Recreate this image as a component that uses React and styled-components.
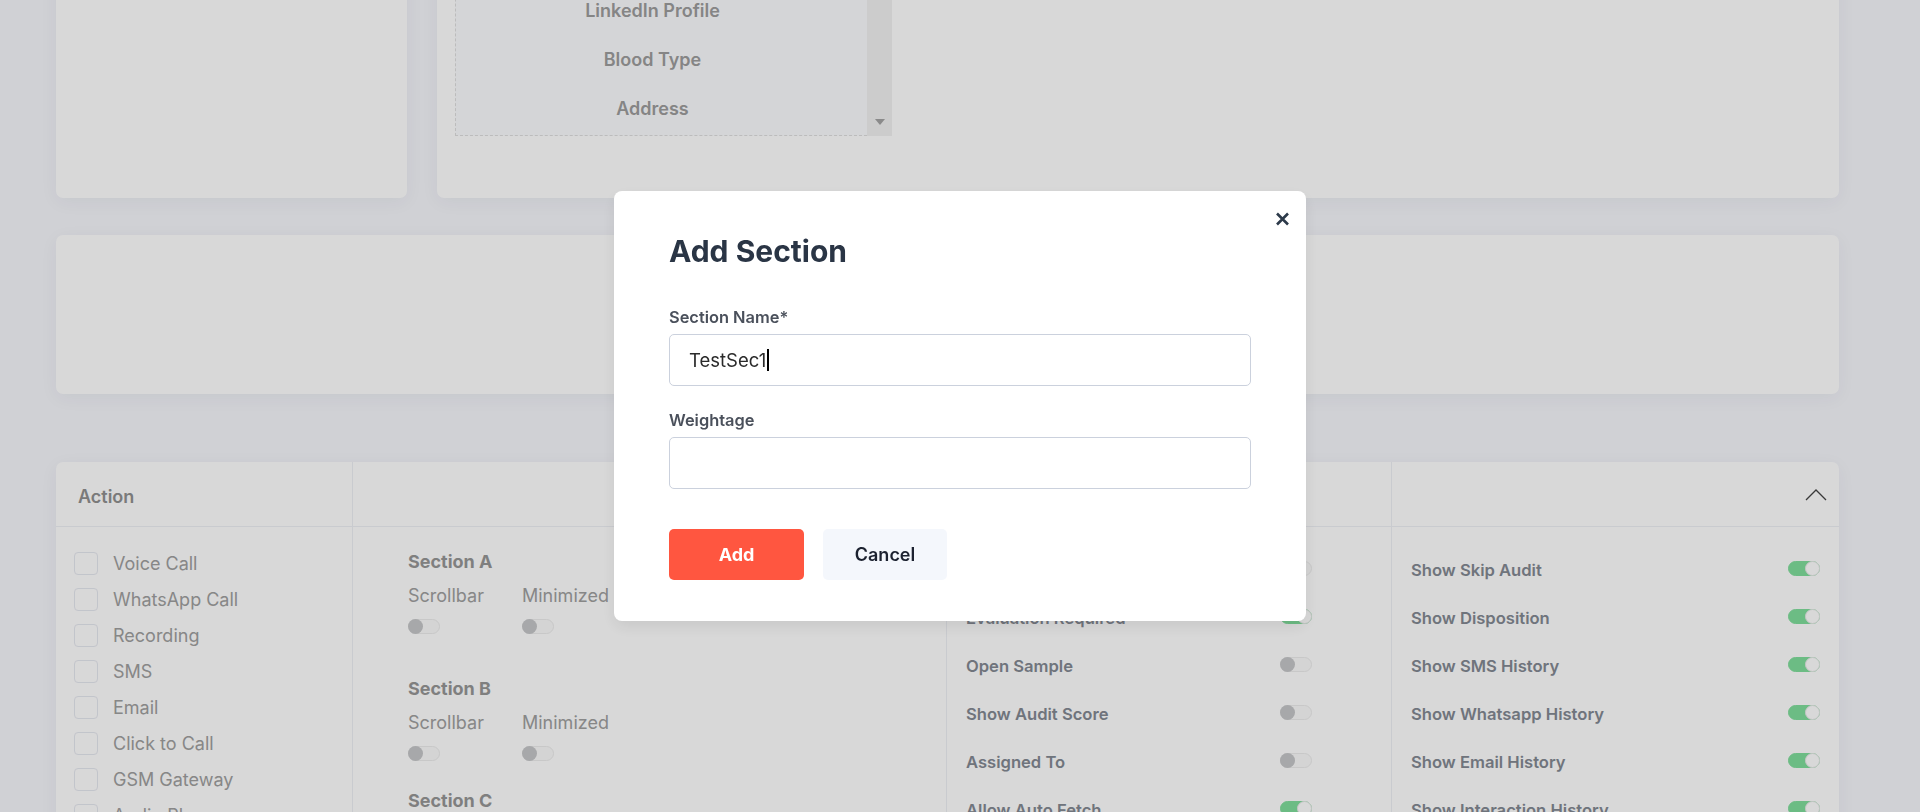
import React from 'react';
import styled, { createGlobalStyle } from 'styled-components';

const GlobalStyle = createGlobalStyle`
  html, body {
    margin: 0;
    padding: 0;
    overflow: hidden;
    background: #f6f7fc;
    font-family: Inter, "Noto Sans", sans-serif;
  }
  * { box-sizing: border-box; }
`;

const COLORS = {
  card: '#ffffff',
  line: '#eef0f5',
  muted: '#a0a0a0',
  mutedBold: '#979797',
  slate: '#848993',
  green: '#80de9c',
};

const ACTIONS = ['Voice Call', 'WhatsApp Call', 'Recording', 'SMS', 'Email', 'Click to Call', 'GSM Gateway', 'Audio Player'];
const SECTIONS = ['Section A', 'Section B', 'Section C'];
const AUDIT_SETTINGS = [
  { label: 'Allow Skip Audit', on: false },
  { label: 'Evaluation Required', on: true },
  { label: 'Open Sample', on: false },
  { label: 'Show Audit Score', on: false },
  { label: 'Assigned To', on: false },
  { label: 'Allow Auto Fetch', on: true },
];
const VIEW_SETTINGS = [
  'Show Skip Audit',
  'Show Disposition',
  'Show SMS History',
  'Show Whatsapp History',
  'Show Email History',
  'Show Interaction History',
];
const FIELDS = ['Date of Birth', 'Gender', 'Phone Number', 'LinkedIn Profile', 'Blood Type', 'Address'];

const Toggle = ({ on }) => (
  <Track $on={on}>
    <Knob $on={on} />
  </Track>
);

const App = () => {
  return (
    <>
      <GlobalStyle />
      <Page>
        <TopRow>
          <SideCard />
          <FieldsCard>
            <FieldsBox>
              <DashedList>
                {FIELDS.map(f => <FieldItem key={f}>{f}</FieldItem>)}
              </DashedList>
              <ScrollTrack>
                <ScrollArrow />
              </ScrollTrack>
            </FieldsBox>
          </FieldsCard>
        </TopRow>

        <BlankCard />

        <PermissionsCard>
          <HeaderCell>Action</HeaderCell>
          <HeaderCell $span={2} />
          <HeaderCell $end>
            <svg width="22" height="13" viewBox="0 0 22 13" fill="none">
              <polyline points="1,12 11,2 21,12" stroke="#444" strokeWidth="1.3" />
            </svg>
          </HeaderCell>

          <ActionCell>
            {ACTIONS.map(a => (
              <CheckRow key={a}>
                <Checkbox />
                <CheckLabel>{a}</CheckLabel>
              </CheckRow>
            ))}
          </ActionCell>

          <SectionCell>
            {SECTIONS.map(s => (
              <SectionBlock key={s}>
                <SectionTitle>{s}</SectionTitle>
                <OptionRow>
                  <OptionCol>
                    <OptionLabel>Scrollbar</OptionLabel>
                    <Toggle on={false} />
                  </OptionCol>
                  <OptionCol>
                    <OptionLabel>Minimized</OptionLabel>
                    <Toggle on={false} />
                  </OptionCol>
                </OptionRow>
              </SectionBlock>
            ))}
          </SectionCell>

          <SettingsCell $right={79}>
            {AUDIT_SETTINGS.map(s => (
              <SettingRow key={s.label}>
                <SettingLabel>{s.label}</SettingLabel>
                <Toggle on={s.on} />
              </SettingRow>
            ))}
          </SettingsCell>

          <SettingsCell $right={19} $last>
            {VIEW_SETTINGS.map(s => (
              <SettingRow key={s}>
                <SettingLabel>{s}</SettingLabel>
                <Toggle on />
              </SettingRow>
            ))}
          </SettingsCell>
        </PermissionsCard>
      </Page>

      <Overlay>
        <Modal>
          <CloseButton aria-label="Close">
            <svg width="15" height="14" viewBox="0 0 15 14" fill="none">
              <path d="M2 1.5 L13 12.5 M13 1.5 L2 12.5" stroke="#2d3a4a" strokeWidth="2.6" />
            </svg>
          </CloseButton>
          <Title>Add Section</Title>
          <FieldLabel>Section Name*</FieldLabel>
          <InputShell>
            <InlineInput defaultValue="TestSec1" />
            <Caret />
          </InputShell>
          <FieldLabel $gap>Weightage</FieldLabel>
          <InputShell>
            <InlineInput $fill />
          </InputShell>
          <ButtonRow>
            <PrimaryButton>Add</PrimaryButton>
            <SecondaryButton>Cancel</SecondaryButton>
          </ButtonRow>
        </Modal>
      </Overlay>
    </>
  );
};

const Page = styled.div`
  padding: 0 81px 0 56px;
  margin-top: -120px;
`;

const Card = styled.div`
  background: ${COLORS.card};
  border-radius: 7px;
  box-shadow: 0 4px 18px rgba(20, 30, 60, 0.05);
`;

const TopRow = styled.div`
  display: flex;
  gap: 30px;
  height: 318px;
`;

const SideCard = styled(Card)`
  width: 351px;
`;

const FieldsCard = styled(Card)`
  flex: 1;
  display: flex;
  padding: 24px 0 62px 18px;
  overflow: hidden;
`;

const FieldsBox = styled.div`
  display: flex;
  width: 437px;
`;

const DashedList = styled.div`
  flex: 1;
  display: flex;
  flex-direction: column;
  justify-content: flex-end;
  overflow: hidden;
  padding: 0 18px 2px 0;
  border-left: 1px dashed #dedede;
  border-bottom: 1px dashed #dedede;
  background: #fbfcfe;
`;

const FieldItem = styled.div`
  flex-shrink: 0;
  height: 49px;
  display: flex;
  align-items: center;
  justify-content: center;
  font-size: 18px;
  font-weight: 600;
  color: #9d9d9d;
`;

const ScrollTrack = styled.div`
  width: 25px;
  background: #f1f1f1;
  display: flex;
  flex-direction: column;
  justify-content: flex-end;
  align-items: center;
  padding-bottom: 11px;
`;

const ScrollArrow = styled.div`
  width: 0;
  height: 0;
  border-left: 5px solid transparent;
  border-right: 5px solid transparent;
  border-top: 6px solid #a3a3a3;
`;

const BlankCard = styled(Card)`
  margin-top: 37px;
  height: 159px;
`;

const PermissionsCard = styled(Card)`
  margin-top: 68px;
  display: grid;
  grid-template-columns: 297px 594px 445px 1fr;
  grid-template-rows: 65px auto;
  min-height: 480px;
`;

const HeaderCell = styled.div`
  grid-column: span ${p => p.$span || 1};
  display: flex;
  align-items: center;
  justify-content: ${p => (p.$end ? 'flex-end' : 'flex-start')};
  padding: ${p => (p.$end ? '0 12px 0 0' : '5px 22px 0')};
  border-bottom: 1px solid ${COLORS.line};
  border-right: ${p => (p.$end ? 'none' : `1px solid ${COLORS.line}`)};
  font-size: 18px;
  font-weight: 600;
  color: #909090;
`;

const BodyCell = styled.div`
  border-right: ${p => (p.$last ? 'none' : `1px solid ${COLORS.line}`)};
`;

const ActionCell = styled(BodyCell)`
  padding: 18px 0 0 18px;
`;

const CheckRow = styled.div`
  height: 36px;
  display: flex;
  align-items: center;
`;

const Checkbox = styled.span`
  width: 24px;
  height: 23px;
  border: 1px solid #e6e9f0;
  border-radius: 4px;
  margin-right: 15px;
`;

const CheckLabel = styled.span`
  font-size: 18px;
  color: ${COLORS.muted};
`;

const SectionCell = styled(BodyCell)`
  padding: 24px 0 0 55px;
`;

const SectionBlock = styled.div`
  margin-bottom: 40px;

  &:nth-child(2) {
    margin-bottom: 25px;
  }
`;

const SectionTitle = styled.div`
  font-size: 18px;
  line-height: 22px;
  font-weight: 700;
  color: ${COLORS.mutedBold};
  margin-bottom: 12px;
`;

const OptionRow = styled.div`
  display: flex;
`;

const OptionCol = styled.div`
  width: 114px;
  display: flex;
  flex-direction: column;
  gap: 12px;
`;

const OptionLabel = styled.span`
  font-size: 18px;
  line-height: 22px;
  color: ${COLORS.muted};
`;

const SettingsCell = styled(BodyCell)`
  padding: 19px ${p => p.$right}px 0 19px;
`;

const SettingRow = styled.div`
  height: 48px;
  display: flex;
  align-items: center;
  justify-content: space-between;
`;

const SettingLabel = styled.span`
  font-size: 16.6px;
  font-weight: 600;
  color: ${COLORS.slate};
`;

const Track = styled.span`
  width: 32px;
  height: 15px;
  margin-bottom: 4px;
  border-radius: 8px;
  display: flex;
  background: ${p => (p.$on ? COLORS.green : '#fbfbfb')};
  border: 1px solid ${p => (p.$on ? COLORS.green : '#ececec')};
`;

const Knob = styled.span`
  width: 15px;
  height: 15px;
  margin: -1px;
  border-radius: 50%;
  margin-left: ${p => (p.$on ? 'auto' : '-1px')};
  background: ${p => (p.$on ? '#ffffff' : '#c6c7c9')};
  border: ${p => (p.$on ? '1px solid #eaeaea' : 'none')};
`;

const Overlay = styled.div`
  position: fixed;
  inset: 0;
  background: rgba(0, 0, 0, 0.153);
  display: flex;
  align-items: center;
  justify-content: center;
`;

const Modal = styled.div`
  position: relative;
  width: 692px;
  background: #fff;
  border-radius: 8px;
  padding: 43px 55px 41px;
  box-shadow: 0 6px 16px rgba(0, 0, 0, 0.08);
  display: flex;
  flex-direction: column;
`;

const CloseButton = styled.button`
  position: absolute;
  top: 21px;
  right: 16px;
  padding: 0;
  border: none;
  background: none;
  display: flex;
  cursor: pointer;
`;

const Title = styled.h2`
  margin: 0 0 39px;
  font-size: 30px;
  line-height: 34px;
  font-weight: 700;
  color: #2a3545;
`;

const FieldLabel = styled.label`
  margin: ${p => (p.$gap ? '24px' : '0')} 0 7px;
  font-size: 16.4px;
  line-height: 20px;
  font-weight: 600;
  color: #4a505b;
`;

const InputShell = styled.div`
  height: 52px;
  display: flex;
  align-items: center;
  padding: 0 19px;
  border: 1px solid #cbd1dd;
  border-radius: 5px;
  cursor: text;
`;

const InlineInput = styled.input`
  field-sizing: content;
  flex: ${p => (p.$fill ? 1 : 'none')};
  min-width: 0;
  padding: 0;
  border: none;
  outline: none;
  background: transparent;
  font-family: Inter, sans-serif;
  font-size: 18.5px;
  color: #2b2b2b;
`;

const Caret = styled.span`
  width: 2px;
  height: 22px;
  margin-left: 1px;
  background: #000;
`;

const ButtonRow = styled.div`
  display: flex;
  gap: 19px;
  margin-top: 40px;
`;

const PrimaryButton = styled.button`
  width: 135px;
  height: 51px;
  border: none;
  border-radius: 5px;
  background: #ff5640;
  color: #fff;
  font-family: Inter, sans-serif;
  font-size: 18px;
  font-weight: 700;
`;

const SecondaryButton = styled(PrimaryButton)`
  width: 124px;
  background: #f4f7fc;
  color: #1c2230;
  font-weight: 600;
`;

export default App;
